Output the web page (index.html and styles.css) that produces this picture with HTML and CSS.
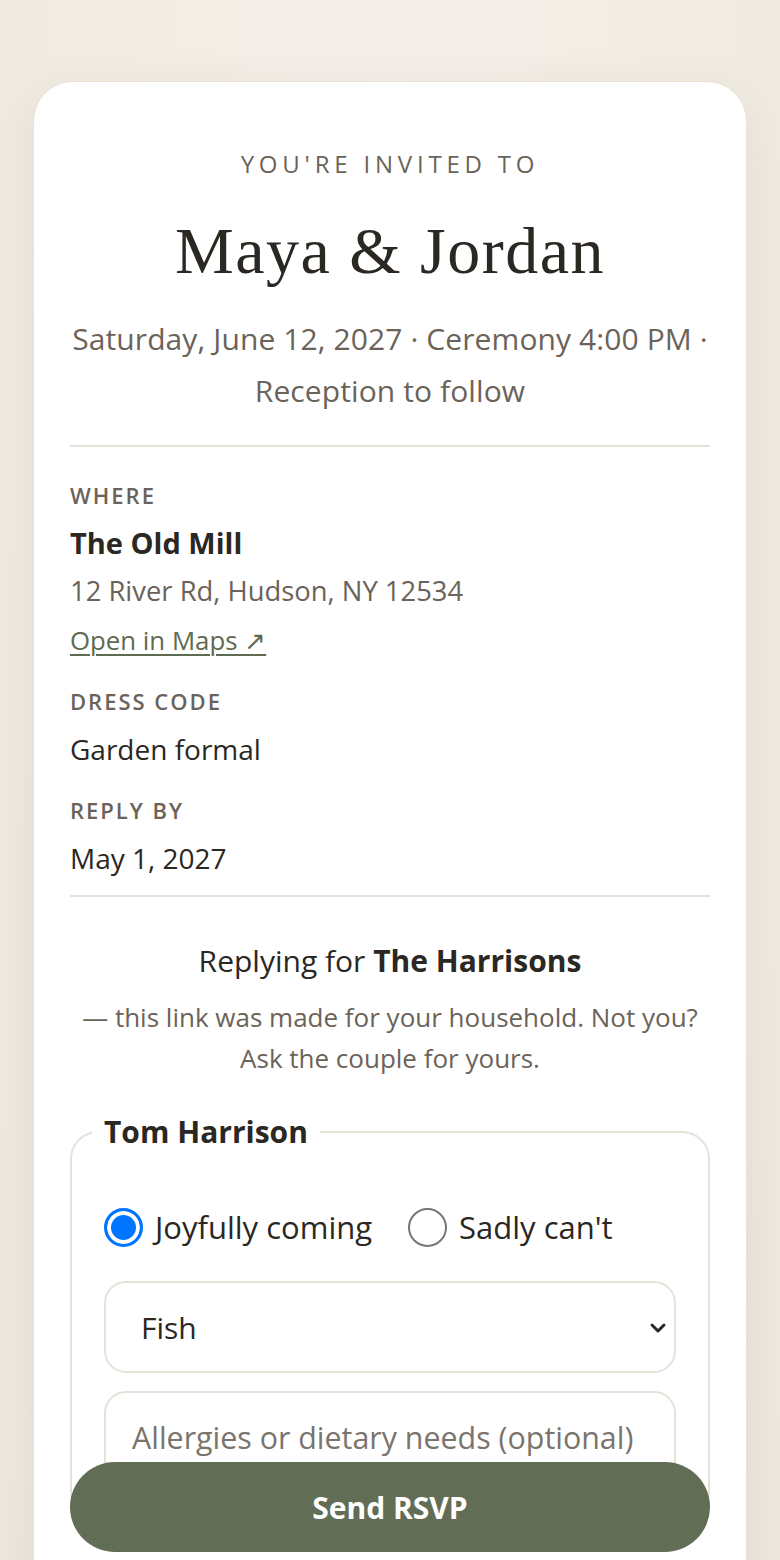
FILE: index.html
```html
<!DOCTYPE html>
<html lang="en">
<head>
<meta charset="utf-8">
<title>RSVP — Maya &amp; Jordan</title>
<link rel="stylesheet" href="styles.css">
</head>
<body>
<main class="card">
  <header class="intro">
    <p class="eyebrow">You're invited to</p>
    <h1 class="couple">Maya &amp; Jordan</h1>
    <p class="when">Saturday, June 12, 2027 · Ceremony 4:00 PM · Reception to follow</p>
  </header>
  <hr class="rule">
  <dl class="details">
    <dt>Where</dt>
    <dd class="venue">The Old Mill</dd>
    <dd class="muted">12 River Rd, Hudson, NY 12534</dd>
    <dd><a class="maplink" href="#">Open in Maps ↗</a></dd>
    <dt>Dress code</dt>
    <dd>Garden formal</dd>
    <dt>Reply by</dt>
    <dd>May 1, 2027</dd>
  </dl>
  <hr class="rule rule-tight">
  <p class="household">Replying for <strong>The Harrisons</strong></p>
  <p class="note">— this link was made for your household. Not you? Ask the couple for yours.</p>
  <form class="rsvp">
    <fieldset class="guest">
      <legend>Tom Harrison</legend>
      <div class="choices">
        <label class="choice"><input class="radio" type="radio" name="tom" checked> Joyfully coming</label>
        <label class="choice"><input class="radio" type="radio" name="tom"> Sadly can't</label>
      </div>
      <div class="select-wrap">
        <select class="field">
          <option>Fish</option>
          <option>Chicken</option>
          <option>Vegetarian</option>
        </select>
        <svg class="chev" width="18" height="12" viewBox="0 0 18 12" aria-hidden="true"><path d="M3 3 L9 9 L15 3" fill="none" stroke="#2b2722" stroke-width="3" stroke-linecap="round" stroke-linejoin="round"/></svg>
      </div>
      <input class="field text" type="text" placeholder="Allergies or dietary needs (optional)">
    </fieldset>
    <button class="send" type="submit">Send RSVP</button>
  </form>
</main>
</body>
</html>
```
FILE: styles.css
```css
* { box-sizing: border-box; }

html {
  margin: 0;
  height: 100%;
  overflow: hidden;
}

body {
  margin: 0;
  height: 100%;
  overflow: hidden;
  background: radial-gradient(ellipse at 50% 0%, #f3efe8 0%, #f1ece3 60%, #eee8de 100%);
  padding: 81px 33px 0;
  font-family: "Open Sans", "Noto Sans", sans-serif;
  color: #2b2722;
}

.card {
  background: #ffffff;
  border: 1px solid #e8e2d7;
  border-radius: 40px;
  box-shadow: 0 12px 48px rgba(90, 70, 40, 0.09);
  padding: 66px 36px 60px;
}

.intro { text-align: center; }

.eyebrow {
  margin: 0;
  font-size: 24px;
  line-height: 32px;
  letter-spacing: 4.8px;
  text-transform: uppercase;
  color: #6b6359;
}

.couple {
  margin: 32px 0 0;
  font-family: "Liberation Serif", "Times New Roman", serif;
  font-weight: 400;
  font-size: 66px;
  line-height: 77px;
  letter-spacing: 1.5px;
  color: #2b2722;
}

.when {
  margin: 24px 0 0;
  font-size: 30px;
  line-height: 52px;
  letter-spacing: 0.1px;
  color: #6b6359;
}

.rule {
  border: 0;
  border-top: 2px solid #e7e2d8;
  margin: 28px 0 0;
}

.rule-tight { margin-top: 13px; }

.details {
  margin: 24px 0 0;
}

.details dt {
  margin-top: 13px;
  font-size: 22px;
  line-height: 48px;
  font-weight: 600;
  letter-spacing: 2px;
  text-transform: uppercase;
  color: #6b6359;
}

.details dt:first-child { margin-top: 0; }

.details dd {
  margin: 0;
  font-size: 28px;
  line-height: 48px;
  color: #2b2722;
}

.details .venue { font-weight: 700; font-size: 29px; }
.details .muted { color: #6b6359; font-size: 27.4px; }

.maplink {
  color: #5e6b50;
  text-decoration: underline;
  text-underline-offset: 4px;
  text-decoration-thickness: 2px;
  font-size: 25.8px;
}

.household {
  margin: 42px 0 0;
  text-align: center;
  font-size: 30px;
  line-height: 44px;
}

.household strong { font-weight: 700; }

.note {
  margin: 14px 0 0;
  text-align: center;
  font-size: 26px;
  line-height: 41px;
  color: #6b6359;
}

.rsvp { margin-top: 32px; }

.guest {
  margin: 0 0 24px;
  border: 2px solid #e7e2d8;
  border-radius: 28px;
  padding: 54px 32px 34px;
  min-width: 0;
}

.guest legend {
  margin-left: -12px;
  padding: 0 12px;
  font-size: 30px;
  line-height: 42px;
  font-weight: 700;
  color: #2b2722;
}

.choices {
  display: flex;
  gap: 36px;
  align-items: center;
}

.choice {
  display: flex;
  align-items: center;
  gap: 12px;
  font-size: 31px;
  line-height: 40px;
  color: #2b2722;
}

.radio {
  appearance: none;
  -webkit-appearance: none;
  flex: none;
  width: 39px;
  height: 39px;
  margin: 0;
  border-radius: 50%;
  border: 2px solid #767676;
  background: #ffffff;
}

.radio:checked {
  border: 3px solid #0075ff;
  background: #0075ff;
  box-shadow: inset 0 0 0 4px #ffffff;
}

.select-wrap {
  position: relative;
  margin-top: 34px;
}

.field {
  display: block;
  width: 100%;
  height: 92px;
  border: 2px solid #e7e2d8;
  border-radius: 22px;
  background: #ffffff;
  font-family: inherit;
  font-size: 30px;
  color: #2b2722;
  padding: 0 28px 0 35px;
  appearance: none;
  -webkit-appearance: none;
}

.chev {
  position: absolute;
  right: 9px;
  top: 41px;
}

.field.text {
  margin-top: 18px;
  padding: 0 26px;
  font-size: 30.4px;
}

.field.text::placeholder { color: #7a746d; }

.send {
  position: sticky;
  bottom: 8px;
  display: block;
  width: 100%;
  height: 90px;
  border: 0;
  border-radius: 45px;
  background: #626d55;
  color: #ffffff;
  font-family: inherit;
  font-size: 30px;
  font-weight: 700;
}
```
